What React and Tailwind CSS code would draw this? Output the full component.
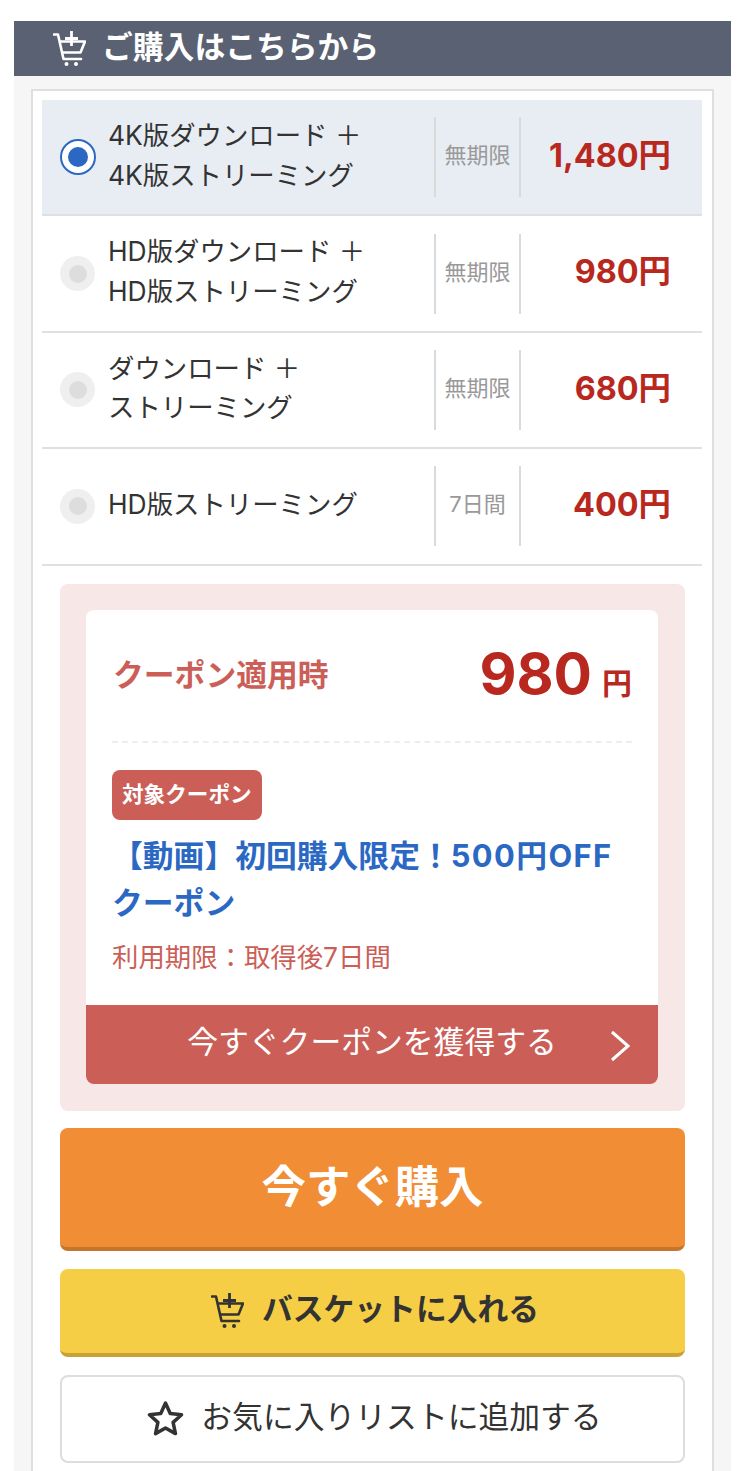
import React from 'react';

const jp = "font-['Inter','Noto_Sans_CJK_JP','Liberation_Sans',sans-serif]";

const plans = [
  { lines: ['4K版ダウンロード ＋', '4K版ストリーミング'], term: '無期限', price: '1,480円', selected: true },
  { lines: ['HD版ダウンロード ＋', 'HD版ストリーミング'], term: '無期限', price: '980円' },
  { lines: ['ダウンロード ＋', 'ストリーミング'], term: '無期限', price: '680円' },
  { lines: ['HD版ストリーミング'], term: '7日間', price: '400円' },
];

const CartIcon = ({ className }) => (
  <svg viewBox="0 0 33 36" fill="none" stroke="currentColor" strokeWidth="2.6" className={className}>
    <path d="M1 3.5h4l5.5 24.5H28" strokeLinecap="round" strokeLinejoin="round" />
    <path d="M6 10.5h26L27.5 21.5H8" strokeLinejoin="round" />
    <path d="M18.5 0v15M12 7.5h13" strokeWidth="2.8" />
    <circle cx="13.5" cy="33" r="2" fill="currentColor" stroke="none" />
    <circle cx="23" cy="33" r="2" fill="currentColor" stroke="none" />
  </svg>
);

const PlanRow = ({ plan }) => (
  <div className={`flex h-[116.4px] items-center border-b-2 border-[#dfe0e1] ${plan.selected ? 'bg-[#e7edf3]' : ''}`}>
    <div className="ml-[18px] w-[36px] shrink-0">
      {plan.selected ? (
        <div className="flex h-[36px] w-[36px] items-center justify-center rounded-full border-2 border-[#2b68c4] bg-white">
          <div className="h-[20px] w-[20px] rounded-full bg-[#2b68c4]" />
        </div>
      ) : (
        <div className="flex h-[35px] w-[35px] items-center justify-center rounded-full bg-[#efefef]">
          <div className="h-[18px] w-[18px] rounded-full bg-[#dddddd]" />
        </div>
      )}
    </div>
    <div className="mb-[3px] ml-[12px] w-[326px] shrink-0 text-[26.4px] leading-[39.6px] text-[#333333]">
      {plan.lines.map((line) => (
        <div key={line} className="whitespace-pre">{line}</div>
      ))}
    </div>
    <div className="flex h-[80px] w-[87px] shrink-0 items-center justify-center border-x-2 border-[#d9dadb] text-[22px] text-[#999999]">
      <span className="mb-[3px]">{plan.term}</span>
    </div>
    <div className="mb-[2px] w-[150px] shrink-0 text-right text-[32.4px] font-bold text-[#b8281e]">{plan.price}</div>
  </div>
);

export default function App() {
  return (
    <div className={`h-[1471px] overflow-hidden bg-white pt-[21px] pl-[14px] ${jp}`}>
      <div className="w-[717px]">
        <div className="flex h-[55px] items-center bg-[#5a6172] pl-[39px] text-white">
          <CartIcon className="h-[36px] w-[33px]" />
          <span className="mb-[3px] ml-[16px] text-[30.8px] font-bold">ご購入はこちらから</span>
        </div>
        <div className="h-[1400px] bg-[#f6f6f7] px-[17px] pt-[13px]">
          <div className="h-full border-2 border-[#dfdfe0] bg-white pt-[9px] pl-[9px]">
            <div className="w-[660px]">
              {plans.map((plan) => (
                <PlanRow key={plan.price} plan={plan} />
              ))}
            </div>

            <div className="ml-[18px] w-[625px]">
              <div className="mt-[18px] rounded-[8px] bg-[#f7e7e7] pt-[26px] pr-[27px] pb-[27px] pl-[26px]">
                <div className="overflow-hidden rounded-[8px] bg-white">
                  <div className="px-[26px]">
                    <div className="flex h-[133px] items-center justify-between border-b-2 border-dashed border-[#eeeeee]">
                      <span className="ml-[1px] text-[30.8px] font-bold text-[#cb5f58]">クーポン適用時</span>
                      <span className="flex items-baseline font-bold text-[#b8281e]">
                        <span className="text-[57px] leading-none">980</span>
                        <span className="ml-[10px] text-[30px]">円</span>
                      </span>
                    </div>
                    <div className="mt-[27px] inline-block h-[50px] rounded-[8px] bg-[#cb5f58] px-[10px] text-[21.6px] leading-[48px] font-bold text-white">
                      対象クーポン
                    </div>
                    <div className="mt-[12px] text-[30.8px] leading-[47px] font-bold text-[#2b68c4]">
                      <div>【動画】初回購入限定！<span className="tracking-[1.4px]">500円OFF</span></div>
                      <div>クーポン</div>
                    </div>
                    <div className="mt-[12px] text-[26.4px] leading-[39px] text-[#cb5f58]">利用期限：取得後7日間</div>
                  </div>
                  <div className="relative mt-[28px] flex h-[79px] items-center justify-center bg-[#cb5f58] pb-[3px] text-[30.8px] text-white">
                    今すぐクーポンを獲得する
                    <svg viewBox="0 0 20 32" fill="none" stroke="currentColor" strokeWidth="3" className="absolute right-[28px] top-[25px] h-[32px] w-[20px]">
                      <path d="M2 2l16 14L2 30" />
                    </svg>
                  </div>
                </div>
              </div>

              <div className="mt-[17px] flex h-[123px] items-center justify-center rounded-[8px] border-b-4 border-[#c4772c] bg-[#f08d35] text-[44.4px] font-bold text-white">
                今すぐ購入
              </div>
              <div className="mt-[18px] flex h-[88px] items-center justify-center rounded-[8px] border-b-4 border-[#c9a237] bg-[#f5ce45] pl-[5px] text-[30.8px] font-bold text-[#333333]">
                <CartIcon className="mr-[18px] h-[36px] w-[33px]" />
                <span className="mb-[3px]">バスケットに入れる</span>
              </div>
              <div className="mt-[18px] flex h-[88px] items-center justify-center rounded-[8px] border-2 border-[#dddddd] bg-white pl-[4px] text-[30.8px] text-[#333333]">
                <svg viewBox="0 0 36 36" fill="none" stroke="currentColor" strokeWidth="3.4" strokeLinejoin="round" className="mr-[17px] h-[37px] w-[37px]">
                  <path d="M18 3l4.6 10.2 11 1.2-8.2 7.4 2.3 10.9L18 27.2 8.3 32.7l2.3-10.9-8.2-7.4 11-1.2z" />
                </svg>
                <span className="mb-[3px]">お気に入りリストに追加する</span>
              </div>
            </div>
          </div>
        </div>
      </div>
    </div>
  );
}
